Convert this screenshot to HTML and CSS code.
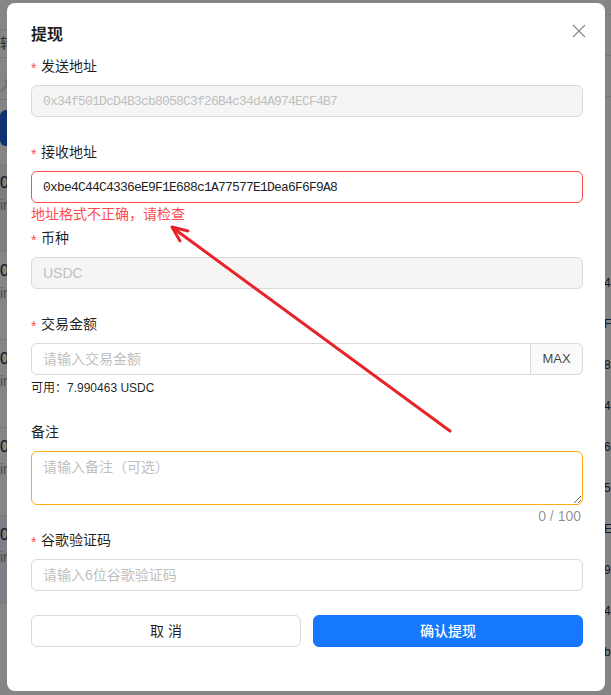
FILE: index.html
```html
<!DOCTYPE html>
<html lang="zh-CN">
<head>
<meta charset="utf-8">
<title>提现</title>
<link rel="stylesheet" href="styles.css">
</head>
<body>
<!-- wallet page behind the dialog -->
<div class="page">
  <div class="page-main">
    <div class="top-bar"></div>
    <div class="filter filter-dark">转</div>
    <div class="filter filter-light">入</div>
    <div class="search-btn"></div>
    <div class="tx-list">
      <div class="tx-row tx-row-shade"><div class="tx-amt">0.5</div><div class="tx-type">in</div></div>
      <div class="tx-row"><div class="tx-amt">0.2</div><div class="tx-type">in</div></div>
      <div class="tx-row"><div class="tx-amt">0.1</div><div class="tx-type">in</div></div>
      <div class="tx-row"><div class="tx-amt">0.0</div><div class="tx-type">in</div></div>
      <div class="tx-row tx-row-blue"><div class="tx-amt">0.0</div><div class="tx-type">in</div></div>
    </div>
  </div>
  <div class="page-side">
    <div class="side-head"></div>
    <div class="side-line"></div>
    <div class="side-line"></div>
    <ul class="hash-list">
      <li>4</li><li>F</li><li>8</li><li>4</li><li>6</li>
      <li>5</li><li>E</li><li>9</li><li>4</li><li>b</li>
    </ul>
  </div>
</div>

<div class="mask"></div>

<div class="modal" role="dialog" aria-labelledby="withdraw-title">
  <div class="modal-header">
    <div class="modal-title" id="withdraw-title">提现</div>
    <button class="modal-close" type="button" aria-label="关闭">
      <svg width="14" height="14" viewBox="0 0 14 14"><path d="M1 1L13 13M13 1L1 13" stroke="#8c8c8c" stroke-width="1.3" fill="none"/></svg>
    </button>
  </div>

  <form class="form">
    <div class="item">
      <div class="label"><span class="req">*</span>发送地址</div>
      <input class="input mono" type="text" value="0x34f501DcD4B3cb8058C3f26B4c34d4A974ECF4B7" disabled>
    </div>

    <div class="item item-error">
      <div class="label"><span class="req">*</span>接收地址</div>
      <input class="input mono input-error" type="text" value="0xbe4C44C4336eE9F1E688c1A77577E1Dea6F6F9A8">
      <div class="explain">地址格式不正确，请检查</div>
    </div>

    <div class="item">
      <div class="label"><span class="req">*</span>币种</div>
      <input class="input" type="text" value="USDC" disabled>
    </div>

    <div class="item">
      <div class="label"><span class="req">*</span>交易金额</div>
      <div class="group">
        <input class="input input-grouped" type="text" placeholder="请输入交易金额">
        <span class="addon">MAX</span>
      </div>
      <div class="extra">可用：7.990463 USDC</div>
    </div>

    <div class="item item-count">
      <div class="label">备注</div>
      <textarea class="textarea" placeholder="请输入备注（可选）"></textarea>
      <div class="count">0 / 100</div>
    </div>

    <div class="item">
      <div class="label"><span class="req">*</span>谷歌验证码</div>
      <input class="input" type="text" placeholder="请输入6位谷歌验证码">
    </div>
  </form>

  <div class="footer">
    <button class="btn" type="button">取 消</button>
    <button class="btn btn-primary" type="button">确认提现</button>
  </div>
</div>

<!-- red pointer arrow drawn over the form -->
<svg class="pointer" width="611" height="695" viewBox="0 0 611 695">
  <g stroke="#e8242b" stroke-width="3" stroke-linecap="round" stroke-linejoin="round" fill="none">
    <path d="M450 431L173 228"/>
    <path d="M188 231L172 227L180 241"/>
  </g>
</svg>
</body>
</html>
```

FILE: styles.css
```css
html, body {
  margin: 0;
  padding: 0;
}

body {
  width: 611px;
  height: 695px;
  overflow: hidden;
  position: relative;
  background: #fff;
  font-family: "Liberation Sans", "Noto Sans CJK SC", sans-serif;
  color: rgba(0, 0, 0, 0.88);
}

/* ---------- page behind ---------- */
.page {
  display: flex;
  width: 611px;
  height: 695px;
}

.page-main {
  width: 604px;
  flex: none;
}

.top-bar {
  height: 30px;
  box-sizing: border-box;
  border-bottom: 1px solid #e3e3e3;
}

.filter {
  height: 28px;
  line-height: 27px;
  box-sizing: border-box;
  font-size: 14px;
  border-bottom: 1px solid #e3e3e3;
}

.filter-dark {
  color: #555;
}

.filter-light {
  margin-top: 14px;
  color: #c4c4c4;
}

.search-btn {
  margin-top: 10px;
  height: 36px;
  width: 96px;
  border-radius: 6px;
  background: #1a5fd8;
}

.tx-list {
  margin-top: 18px;
}

.tx-row {
  height: 88px;
  box-sizing: border-box;
  padding-top: 8px;
  border-bottom: 1px solid #e8e8e8;
}

.tx-row-shade {
  background: #f2f2f2;
}

.tx-row-blue {
  background: #eef3fb;
}

.tx-amt {
  font-size: 16px;
  line-height: 22px;
  color: #1b2440;
}

.tx-type {
  font-size: 14px;
  line-height: 22px;
  color: #8c8c8c;
}

.page-side {
  flex: 1;
  overflow: hidden;
}

.side-head {
  height: 14px;
  border-bottom: 1px solid #e3e3e3;
}

.side-line {
  height: 40px;
  border-bottom: 1px solid #e3e3e3;
}

.hash-list {
  list-style: none;
  margin: 0;
  padding: 166px 0 0;
  font-size: 12px;
  line-height: 41px;
  color: #1f2b57;
}

.mask {
  position: absolute;
  inset: 0;
  background: rgba(0, 0, 0, 0.48);
}

/* ---------- dialog ---------- */
.modal {
  position: absolute;
  left: 7px;
  top: 3px;
  width: 598px;
  box-sizing: border-box;
  padding: 20px 22px 44px 24px;
  background: #fff;
  border-radius: 8px;
}

.modal-header {
  margin-bottom: 8px;
}

.modal-title {
  font-size: 16px;
  font-weight: 600;
  line-height: 24px;
  color: rgba(0, 0, 0, 0.88);
}

.modal-close {
  position: absolute;
  top: 17px;
  right: 15px;
  width: 22px;
  height: 22px;
  padding: 0;
  border: 0;
  background: transparent;
  display: flex;
  align-items: center;
  justify-content: center;
}

.form {
  margin: 0;
}

.item {
  margin-bottom: 24px;
}

.item-error,
.item-count {
  margin-bottom: 0;
}

.label {
  font-size: 14px;
  line-height: 22px;
  padding-bottom: 8px;
  color: rgba(0, 0, 0, 0.88);
}

.req {
  display: inline-block;
  width: 6px;
  margin-right: 4px;
  color: #ff4d4f;
  font-family: "Liberation Sans", sans-serif;
  font-size: 14px;
  line-height: 14px;
  vertical-align: -2px;
}

.input {
  display: block;
  width: 100%;
  height: 32px;
  box-sizing: border-box;
  margin: 0;
  padding: 4px 11px;
  border: 1px solid #d9d9d9;
  border-radius: 6px;
  background: #fff;
  font-family: "Liberation Sans", "Noto Sans CJK SC", sans-serif;
  font-size: 14px;
  line-height: 22px;
  color: rgba(0, 0, 0, 0.88);
  outline: none;
}

.input::placeholder,
.textarea::placeholder {
  color: #bfbfbf;
}

.input:disabled {
  background: #f5f5f5;
  color: #bfbfbf;
  -webkit-text-fill-color: #bfbfbf;
}

.mono {
  font-family: "Liberation Mono", monospace;
  font-size: 13px;
  letter-spacing: -0.8px;
}

.input-error {
  border-color: #ff4d4f;
  color: #1f1f1f;
}

.explain {
  height: 24px;
  font-size: 14px;
  line-height: 22px;
  color: #ff4d4f;
}

.group {
  display: flex;
}

.input-grouped {
  flex: 1;
  border-radius: 6px 0 0 6px;
}

.addon {
  flex: none;
  width: 52px;
  height: 32px;
  box-sizing: border-box;
  border: 1px solid #d9d9d9;
  border-left: 0;
  border-radius: 0 6px 6px 0;
  background: #fafafa;
  font-size: 13px;
  line-height: 30px;
  text-align: center;
  color: rgba(0, 0, 0, 0.75);
}

.extra {
  margin-top: 4px;
  font-size: 12px;
  line-height: 18px;
  color: rgba(0, 0, 0, 0.88);
}

.textarea {
  display: block;
  width: 100%;
  height: 54px;
  box-sizing: border-box;
  margin: 0;
  padding: 4px 11px;
  border: 1px solid #faad14;
  border-radius: 6px;
  font-family: "Liberation Sans", "Noto Sans CJK SC", sans-serif;
  font-size: 14px;
  line-height: 22px;
  resize: vertical;
  outline: none;
}

.count {
  height: 24px;
  font-size: 14px;
  line-height: 22px;
  text-align: right;
  padding-right: 2px;
  color: rgba(0, 0, 0, 0.45);
}

.footer {
  display: flex;
  gap: 12px;
}

.btn {
  flex: 1;
  height: 32px;
  margin: 0;
  padding: 4px 15px;
  border: 1px solid #d9d9d9;
  border-radius: 6px;
  background: #fff;
  font-family: "Liberation Sans", "Noto Sans CJK SC", sans-serif;
  font-size: 14px;
  line-height: 22px;
  color: rgba(0, 0, 0, 0.88);
}

.btn-primary {
  border-color: #1677ff;
  background: #1677ff;
  color: #fff;
  font-weight: 500;
}

/* annotation layer */
.pointer {
  position: absolute;
  left: 0;
  top: 0;
  pointer-events: none;
}
```
